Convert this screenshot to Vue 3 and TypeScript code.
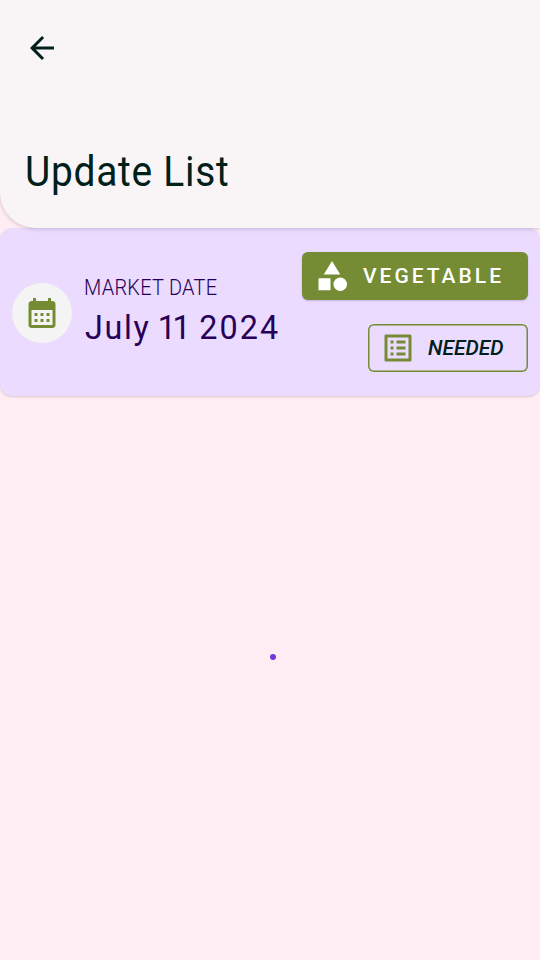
<script setup lang="ts">
const title = 'Update List'
const market = { label: 'MARKET DATE', month: 'July', day: '11', year: '2024' }
</script>

<template>
  <main class="screen">
    <header class="top">
      <svg class="icon back" viewBox="0 0 24 24"><path d="M20 11H7.83l5.59-5.59L12 4l-8 8 8 8 1.41-1.41L7.83 13H20z" /></svg>
      <h1><span>{{ title }}</span></h1>
    </header>
    <section class="card">
      <div class="market">
        <div class="avatar">
          <svg class="icon" viewBox="0 0 24 24"><path d="M19 4h-1V2h-2v2H8V2H6v2H5c-1.11 0-1.99.9-1.99 2L3 20c0 1.1.89 2 2 2h14c1.1 0 2-.9 2-2V6c0-1.1-.9-2-2-2zm0 16H5V10h14v10zM9 14H7v-2h2v2zm4 0h-2v-2h2v2zm4 0h-2v-2h2v2zm-8 4H7v-2h2v2zm4 0h-2v-2h2v2zm4 0h-2v-2h2v2z" /></svg>
        </div>
        <div class="words">
          <div class="label">{{ market.label }}</div>
          <div class="date">
            <span class="month">{{ market.month }}</span> <span class="day">{{ market.day }}</span> <span class="year">{{ market.year }}</span>
          </div>
        </div>
      </div>
      <div class="actions">
        <button class="btn filled">
          <svg class="icon" viewBox="0 0 24 24"><path d="M12 2l-5.5 9h11zM3 13.5h8v8H3z" /><circle cx="17.5" cy="17.5" r="4.5" /></svg>
          <span>VEGETABLE</span>
        </button>
        <button class="btn outlined">
          <svg class="icon" viewBox="0 0 24 24"><path d="M19 5v14H5V5h14m1.1-2H3.9c-.5 0-.9.4-.9.9v16.2c0 .4.4.9.9.9h16.2c.4 0 .9-.5.9-.9V3.9c0-.5-.5-.9-.9-.9zM11 7h6v2h-6V7zm0 4h6v2h-6v-2zm0 4h6v2h-6zM7 7h2v2H7zm0 4h2v2H7zm0 4h2v2H7z" /></svg>
          <span>NEEDED</span>
        </button>
      </div>
    </section>
    <div class="loading"><i class="dot"></i></div>
  </main>
</template>

<style>
body { margin: 0; background: #ffedf3; }
</style>

<style scoped>
* { box-sizing: border-box; }
.screen { width: 540px; height: 960px; display: flex; flex-direction: column; overflow: hidden; background: #ffedf3; font-family: Roboto, sans-serif; }
.icon { width: 36px; height: 36px; flex: none; display: block; fill: currentColor; }
.top { position: relative; z-index: 1; height: 228px; flex: none; padding: 30px 24px 0; background: #f9f5f6; color: #00201a; border-bottom-left-radius: 36px; box-shadow: 0 1px 4px rgba(60, 30, 70, .22); }
h1 { margin: 80px 0 0; padding-left: 1px; font-size: 43px; line-height: 50px; font-weight: 400; white-space: nowrap; }
h1 span { display: inline-block; letter-spacing: .8px; transform: scaleX(.905); transform-origin: left; }
.card { height: 168px; flex: none; display: flex; justify-content: space-between; padding: 0 12px; border-radius: 12px; background: #eadbff; box-shadow: 0 1px 2px rgba(60, 30, 50, .18); }
.market { display: flex; align-items: center; gap: 12px; padding-top: 1px; color: #270057; }
.avatar { width: 60px; height: 60px; display: grid; place-items: center; border-radius: 50%; background: #f4f4f4; color: #768c34; }
.words { width: 200px; white-space: nowrap; }
.label { font-size: 21.5px; line-height: 28px; font-weight: 300; letter-spacing: .3px; transform: translateY(-1px) scaleX(.927); transform-origin: left; }
.date { display: flex; font-size: 34px; line-height: 48px; transform: scaleX(.95); transform-origin: left; }
.month { padding-left: 1px; letter-spacing: 1.8px; }
.day { margin-left: 7.5px; letter-spacing: -3.6px; }
.year { margin-left: 12.8px; letter-spacing: 2.2px; }
.actions { display: flex; flex-direction: column; align-items: flex-end; gap: 24px; padding-top: 24px; }
.btn { height: 48px; display: flex; align-items: center; padding: 0 0 0 12px; border: 0; border-radius: 6px; font: 500 21px/48px Roboto, sans-serif; white-space: nowrap; }
.filled { width: 226.5px; gap: 13.5px; background: #768c34; color: #fff; letter-spacing: 3px; box-shadow: 0 1px 2px rgba(50, 20, 80, .2); }
.outlined { width: 160px; gap: 12px; box-shadow: inset 0 0 0 1.5px #768c34; background: transparent; color: #00201a; font-style: italic; }
.outlined .icon { color: #768c34; }
.loading { flex: 1; display: flex; justify-content: center; padding: 258px 0 0 5px; }
.dot { width: 6px; height: 6px; border-radius: 50%; background: #7137dc; }
</style>
